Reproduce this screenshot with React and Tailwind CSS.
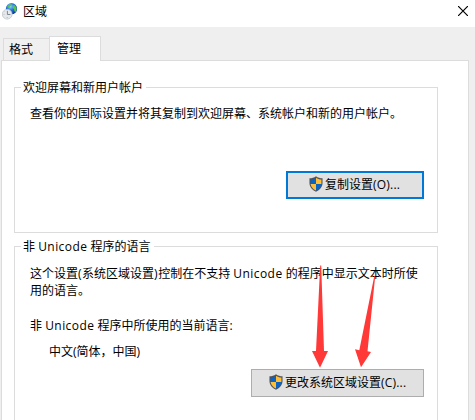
import React from "react";

function Shield() {
  return (
    <svg className="h-4 w-[14px] shrink-0 -translate-y-px" viewBox="0 0 15 16" preserveAspectRatio="none">
      <path d="M7.500 .3C5.500 1.700 3 2.300.5 2.300V7c0 4 3 7 7 8.800 4-1.800 7-4.800 7-8.800V2.300C12 2.300 9.500 1.700 7.500.300Z" fill="#505356" />
      <path d="M7.500 1.700C5.700 2.900 3.800 3.400 1.700 3.500V8h5.800Z" fill="#0a64c4" />
      <path d="M7.500 1.700C9.300 2.900 11.200 3.400 13.300 3.500V8H7.500Z" fill="#ffbe36" />
      <path d="M1.700 8c.4 2.900 2.600 5.200 5.800 6.600V8Z" fill="#ffbe36" />
      <path d="M13.300 8c-.4 2.900-2.600 5.200-5.800 6.600V8Z" fill="#0a64c4" />
    </svg>
  );
}

function RegionIcon() {
  return (
    <svg className="h-[17px] w-4 shrink-0" viewBox="0 0 16 17">
      <defs>
        <radialGradient id="globe" cx=".4" cy=".3" r=".75">
          <stop offset="0" stopColor="#8fd3fa" />
          <stop offset=".45" stopColor="#2475d8" />
          <stop offset="1" stopColor="#092c91" />
        </radialGradient>
      </defs>
      <circle cx="9.500" cy="5.700" r="5.600" fill="url(#globe)" />
      <path d="M5.500 3.500 7.500 1.300l1.800.2-.5 1.500-1.500.8-1.200 1ZM11 2.500l2-.3 1.700 3.300-.7 3.500-1.500-.5-.5-2.500-1.300-1Z" fill="#55c745" />
      <circle cx="5.200" cy="11.200" r="4.900" fill="#e6e9eb" stroke="#b9c0c4" strokeWidth=".7" />
      <path d="M5.400 7.800v3.700h3" fill="none" stroke="#7c878f" strokeWidth="1" />
      <path d="M1.500 11.300h1M5.200 14v1M2.700 8.500l.5.500" stroke="#a4acb1" strokeWidth=".8" />
    </svg>
  );
}

function Unicode() {
  return <span className="tracking-[0.45px]">Unicode</span>;
}

function Group({ title, className, children }) {
  return (
    <fieldset className={`ml-3 w-[424px] border border-[#dcdcdc] ${className}`}>
      <legend className="ml-1.5 h-4 pr-[3px] pl-0.5 leading-[18px] whitespace-nowrap">{title}</legend>
      {children}
    </fieldset>
  );
}

export default function App() {
  return (
    <div className="relative flex h-[420px] w-[475px] flex-col overflow-hidden bg-[#efefef] font-['Open_Sans','Noto_Sans_CJK_SC',sans-serif] text-xs leading-4 text-black">
      <header className="flex h-[27px] shrink-0 items-start bg-white pt-[3px] pl-0.5">
        <RegionIcon />
        <h1 className="ml-[5px] pt-px">区域</h1>
        <svg className="mt-[3px] mr-[7px] ml-auto h-[10px] w-[10px]" viewBox="0 0 10 10">
          <path d="m0 0 10 10m0-10-10 10" stroke="#000" strokeWidth="1.200" />
        </svg>
      </header>

      <nav className="z-10 -mb-px flex h-[34px] shrink-0 items-end pl-[3px]">
        <button className="mb-px h-[22px] w-[46px] border border-r-0 border-b-0 border-[#dcdcdc] bg-[#f0f0f0] pr-2 pl-[5px] text-left leading-[22px]">格式</button>
        <button className="h-[25px] w-[52px] border border-b-0 border-[#dcdcdc] bg-white pl-[7px] text-left leading-[22px]">管理</button>
      </nav>

      <main className="ml-px w-[468px] grow border border-b-0 border-[#dcdcdc] bg-white pt-[18px]">
        <Group title="欢迎屏幕和新用户帐户" className="h-[154px]">
          <p className="mt-[11px] ml-[15px] whitespace-nowrap">查看你的国际设置并将其复制到欢迎屏幕、系统帐户和新的用户帐户。</p>
          <button className="mt-[49px] ml-[271px] flex h-7 w-[138px] items-center border-2 border-[#0078d7] bg-[#e1e1e1] pl-[21px]">
            <Shield />
            <span className="ml-0.5 whitespace-nowrap">复制设置<span className="tracking-[0.2px]">(O)...</span></span>
          </button>
        </Group>

        <Group title={<>非 <Unicode /> 程序的语言</>} className="mt-[5px] h-[220px]">
          <p className="mt-[11px] ml-[15px] leading-[17px] whitespace-nowrap">
            这个设置<span className="tracking-[0.5px]">(</span>系统区域设置<span className="tracking-[0.5px]">)</span>控制在不支持 <Unicode /> 的程序中显示文本时所使<br />用的语言。
          </p>
          <p className="mt-[19px] ml-[15px] whitespace-nowrap">非 <Unicode /> 程序中所使用的当前语言:</p>
          <p className="mt-[10px] ml-[34px]">中文(简体，中国)</p>
          <button className="mt-[9px] ml-[236px] flex h-7 w-[173px] items-center border border-[#adadad] bg-[#e1e1e1] pl-[17px]">
            <Shield />
            <span className="ml-0.5 whitespace-nowrap">更改系统区域设置<span className="tracking-[0.2px]">(C)...</span></span>
          </button>
        </Group>
      </main>

      <svg className="pointer-events-none absolute top-[264px] left-[310px] z-20 h-[106px] w-[70px]" viewBox="310 264 70 106">
        <path d="M320.200 265.500 321.200 265.500 324 351H328L320 367.700 312 351H316Z" fill="#ff3838" />
        <path d="M374.300 276 375.200 276.200 367.500 351.300 371 352 361 367.200 355 349.300 359.300 350.200Z" fill="#ff3838" />
      </svg>
    </div>
  );
}
